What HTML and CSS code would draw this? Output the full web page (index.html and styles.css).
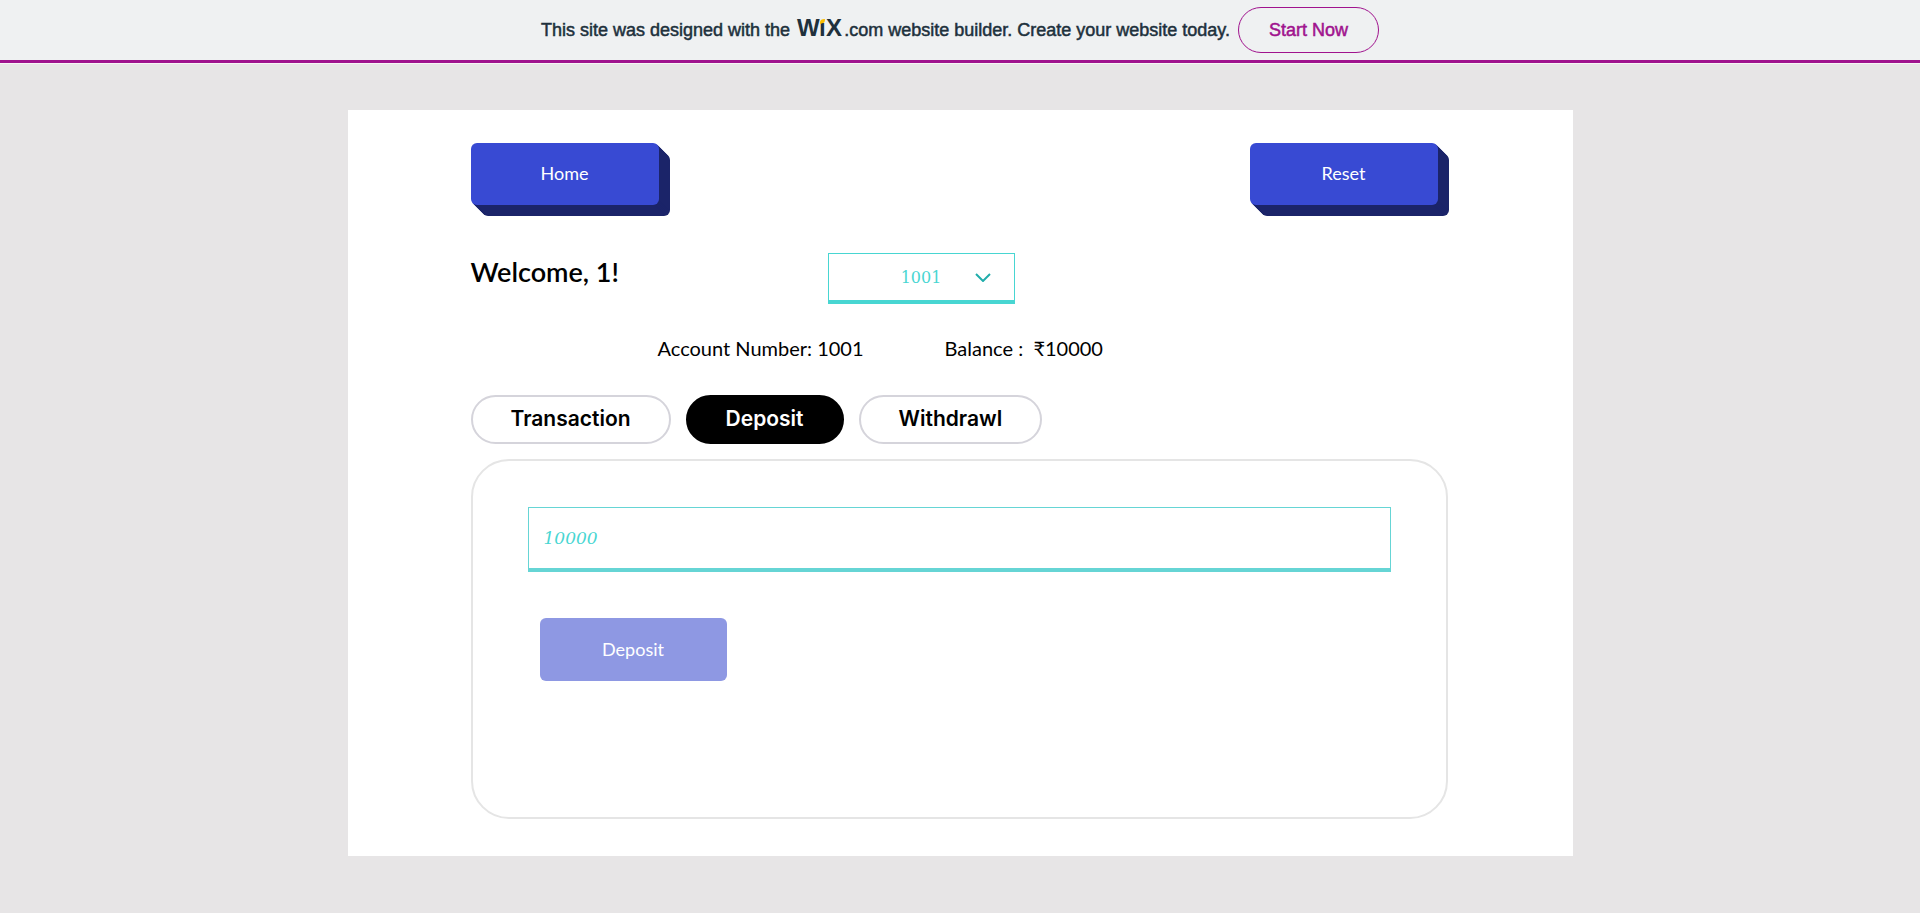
FILE: index.html
```html
<!DOCTYPE html>
<html lang="en">
<head>
<meta charset="utf-8">
<title>Bank account</title>
<meta name="viewport" content="width=device-width, initial-scale=1">
<link rel="stylesheet" href="styles.css">
</head>
<body>
<header class="banner">
  <p class="banner-text">This site was designed with the
    <svg class="wix" viewBox="0 0 46 18" role="img" aria-label="Wix"><text x="0" y="17">W</text><text x="22" y="17">ı</text><text x="29" y="17">X</text><path class="wix-dot" d="M23 5V3Q23 0 28 0Q28 4 26 4Z"/></svg>.com website builder. Create your website today.</p>
  <a class="start" href="#">Start Now</a>
</header>
<main class="card">
  <div class="top">
    <button class="block-btn" type="button">Home</button>
    <button class="block-btn" type="button">Reset</button>
  </div>
  <div class="greet">
    <h1 class="welcome">Welcome, 1!</h1>
    <div class="picker">
      <select class="account" aria-label="Account"><option>1001</option></select>
      <svg class="chevron" viewBox="0 0 16 9" aria-hidden="true"><path d="M1 1L8 8L15 1"/></svg>
    </div>
  </div>
  <div class="summary">
    <p class="fact">Account Number: 1001</p>
    <p class="fact">Balance :&nbsp; ₹10000</p>
  </div>
  <nav class="tabs" role="tablist">
    <button class="tab" type="button" role="tab">Transaction</button>
    <button class="tab active" type="button" role="tab" aria-selected="true">Deposit</button>
    <button class="tab" type="button" role="tab">Withdrawl</button>
  </nav>
  <form class="panel">
    <input class="amount" type="text" placeholder="10000" aria-label="Deposit amount">
    <button class="submit" type="button" disabled>Deposit</button>
  </form>
</main>
</body>
</html>
```
FILE: styles.css
```css
* { box-sizing: border-box; }
body {
  margin: 0;
  background: #e7e5e6;
  color: #000;
  font-family: Lato, sans-serif;
}
button { font-family: inherit; cursor: pointer; }
.banner {
  display: flex;
  justify-content: center;
  align-items: center;
  gap: 8px;
  height: 63px;
  background: #eff1f2;
  border-bottom: 3px solid #a0138e;
  color: #20303c;
  font-family: "Liberation Sans", sans-serif;
  font-size: 18px;
  box-shadow: 0 1px #f6f6f6;
}
.banner-text { margin: 0; line-height: 22px; -webkit-text-stroke: 0.5px currentColor; }
.wix {
  width: 46px;
  height: 18px;
  margin: 0 1px 0 2px;
  vertical-align: -1px;
  overflow: visible;
  fill: #20303c;
  font-size: 24px;
  font-weight: 700;
  -webkit-text-stroke: 0;
}
.wix-dot { fill: #fbbd00; }
.start {
  padding: 12px 30px;
  border: 1px solid #a0138e;
  border-radius: 23px;
  color: #a0138e;
  line-height: 20px;
  text-decoration: none;
  -webkit-text-stroke: 0.5px currentColor;
}
.card {
  max-width: 1225px;
  margin: 47px auto 57px;
  padding: 33px 125px 37px 123px;
  background: #fff;
}
.top {
  display: flex;
  justify-content: space-between;
  padding-right: 10px;
}
.block-btn, .submit {
  width: 188px;
  height: 62px;
  padding-bottom: 3px;
  border: 0;
  border-radius: 6px;
  background: #384ad3;
  color: #fff;
  font-size: 18px;
}
.block-btn {
  box-shadow: 1px 1px #1b2469, 2px 2px #1b2469, 3px 3px #1b2469, 4px 4px #1b2469, 5px 5px #1b2469, 6px 6px #1b2469, 7px 7px #1b2469, 8px 8px #1b2469, 9px 9px #1b2469, 10px 10px #1b2469, 11px 11px #1b2469;
}
.greet {
  display: grid;
  grid-template-columns: 357px 187px;
  margin-top: 48px;
}
.welcome {
  margin: 0;
  font-size: 27px;
  font-weight: 600;
  line-height: 38px;
}
.picker { display: grid; align-items: center; }
.picker > * { grid-area: 1 / 1; }
.account {
  width: 100%;
  height: 51px;
  padding: 0;
  border: 1px solid #48d6d2;
  border-bottom-width: 4px;
  border-radius: 0;
  appearance: none;
  background: #fff;
  color: #48d6d2;
  font-family: "DejaVu Serif", serif;
  font-size: 16px;
  text-align: center;
  text-align-last: center;
}
.chevron {
  justify-self: end;
  width: 16px;
  height: 9px;
  margin: 0 24px 3px 0;
  fill: none;
  stroke: #21adab;
  stroke-width: 2;
  pointer-events: none;
}
.summary { display: flex; gap: 81px; padding: 30px 0 0 187px; }
.fact { margin: 0; font-size: 20px; line-height: 28px; }
.tabs { display: flex; gap: 15px; margin-top: 33px; }
.tab {
  height: 49px;
  padding: 0 38px 2px;
  border: 2px solid #d5d4db;
  border-radius: 25px;
  background: #fff;
  color: #000;
  font-family: Inter, sans-serif;
  font-size: 21px;
  font-weight: 600;
}
.active { border-color: #000; background: #000; color: #fff; }
.panel {
  display: flex;
  flex-direction: column;
  gap: 46px;
  min-height: 360px;
  margin-top: 15px;
  padding: 46px 55px;
  border: 2px solid #e5e5e5;
  border-radius: 38px;
}
.amount {
  width: 100%;
  height: 65px;
  padding: 0 15px;
  border: 1px solid #66d5d5;
  border-bottom-width: 4px;
  border-radius: 0;
  background: #fff;
  font-family: "DejaVu Serif", serif;
  font-size: 17px;
}
.amount::placeholder { color: #48d6d2; font-style: italic; opacity: 1; }
.submit { width: 187px; height: 63px; margin-left: 12px; background: #8e98e3; }
```
